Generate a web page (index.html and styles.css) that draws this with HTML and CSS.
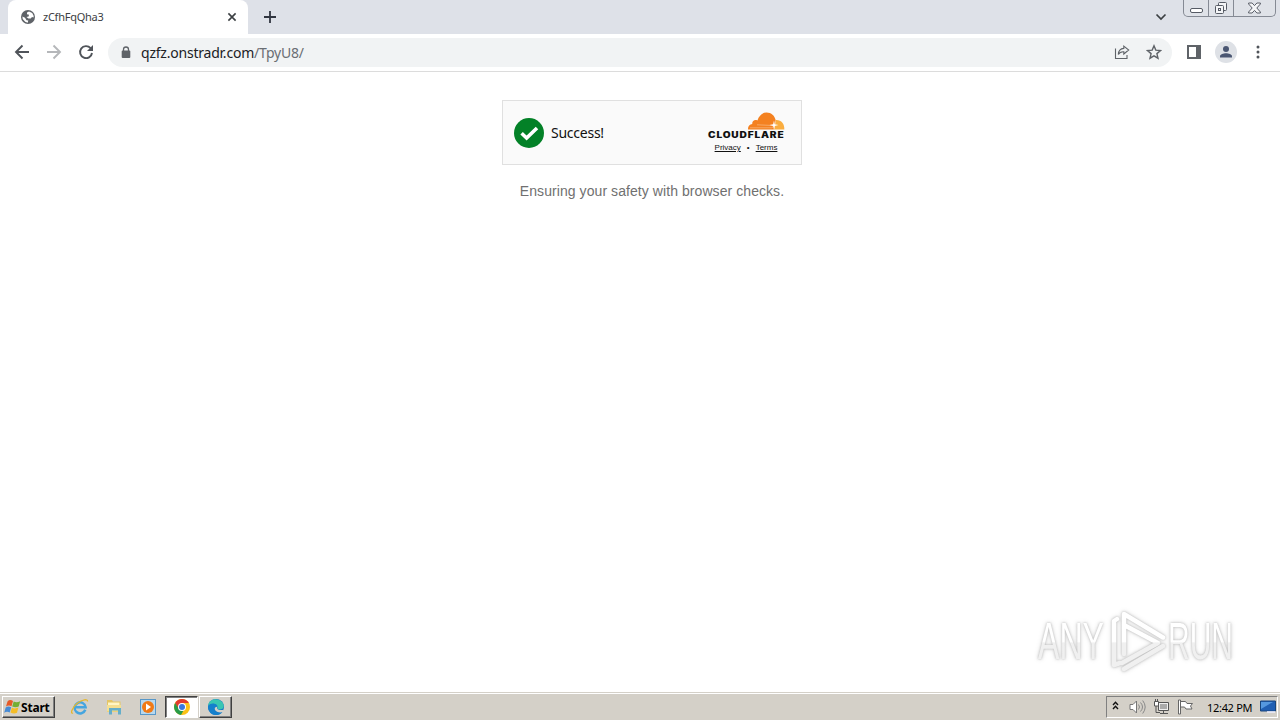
FILE: index.html
```html
<!DOCTYPE html>
<html lang="en">
<head>
<meta charset="utf-8">
<title>zCfhFqQha3</title>
<link rel="stylesheet" href="styles.css">
</head>
<body>
<header class="tabstrip">
  <div class="tab">
    <svg class="globe" width="14" height="14" viewBox="0 0 14 14"><circle cx="7" cy="7" r="7" fill="#5f6368"/><path d="M8 1.500 6 2.600v1.600l2 .6-.4 1.700-2.200.4 2 1.500 2.300.2L11 7l1.500.6.2-1.600-1.500-3zM1.400 6.500l2.600 1.300 1.500 2.400 1.800.3-.6 2.200-2.500-.9L1.700 9z" fill="#fff"/></svg>
    <span class="tab-title">zCfhFqQha3</span>
    <svg class="tab-close" width="10" height="10" viewBox="0 0 10 10"><path d="m1.400 1.400 7.200 7.200m0-7.200L1.400 8.600" stroke="#3c4043" stroke-width="1.600"/></svg>
  </div>
  <svg class="new-tab" width="12" height="12" viewBox="0 0 12 12"><path d="M6 0v12M0 6h12" stroke="#303540" stroke-width="1.800"/></svg>
  <svg class="tab-search" width="12" height="8" viewBox="0 0 12 8"><path d="m1.500 1.500 4.500 4.500 4.500-4.500" fill="none" stroke="#3c4043" stroke-width="1.700"/></svg>
  <div class="window-controls">
    <span class="wc wc-min"><svg width="13" height="5" viewBox="0 0 13 5"><rect x=".5" y=".5" width="12" height="4" rx="1.500" fill="#fff" stroke="#565b65"/></svg></span>
    <span class="wc wc-max"><svg width="14" height="14" viewBox="0 0 14 14" fill="#f4f5f7" stroke="#565b65"><rect x="4.500" y="1.500" width="8" height="8" rx="1"/><rect x="1.500" y="4.500" width="8" height="8" rx="1"/><rect x="4.500" y="7.500" width="2" height="2"/></svg></span>
    <span class="wc wc-close"><svg width="13" height="12" viewBox="0 0 13 12"><path d="M.6 1h3.500l2.400 2.600L8.900 1h3.500v1L8.800 6l3.600 4v1H8.900L6.500 8.400 4.100 11H.6v-1l3.600-4L.6 2z" fill="#f4f5f7" stroke="#5a5e68"/></svg></span>
  </div>
</header>
<nav class="toolbar">
  <div class="nav-icons">
    <svg width="16" height="16" viewBox="0 0 16 16" fill="none" stroke="#50545a" stroke-width="1.900"><path d="M15 8H2m6.500-6.500L2 8l6.500 6.500"/></svg>
    <svg width="16" height="16" viewBox="0 0 16 16" fill="none" stroke="#b5b7ba" stroke-width="1.900"><path d="M1 8h13M7.500 1.500 14 8l-6.500 6.500"/></svg>
    <svg width="16" height="16" viewBox="0 0 16 16"><path d="M12.600 4.200A6 6 0 1 0 14 9" fill="none" stroke="#50545a" stroke-width="1.900"/><path d="M15 1v6H9z" fill="#50545a"/></svg>
  </div>
  <div class="omnibox">
    <svg class="lock" width="10" height="13" viewBox="0 0 10 13"><path d="M2.500 5V3.500a2.500 2.500 0 0 1 5 0V5" fill="none" stroke="#5f6368" stroke-width="1.300"/><rect x=".7" y="4.600" width="8.600" height="7.400" rx="1" fill="#5f6368"/></svg>
    <div class="url"><span class="host">qzfz.onstradr.com</span><span class="path">/TpyU8/</span></div>
    <svg class="share" width="16" height="16" viewBox="0 0 16 16" fill="none" stroke="#5f6368" stroke-width="1.100"><path d="M1.500 4.500v10h11.500V11"/><path d="M9.800 2.100 14.700 6 9.800 10V7.700C7 7.500 5.400 8.500 4.300 10.500 4.500 7 6.300 4.700 9.800 4.400z"/></svg>
    <svg class="star" width="16" height="16" viewBox="0 0 16 16"><path d="m8 1.800 1.800 4.300 4.700.4-3.600 3.100 1.100 4.600L8 11.800l-4 2.400 1.100-4.600-3.600-3.100 4.700-.4z" fill="none" stroke="#5f6368" stroke-width="1.400"/></svg>
  </div>
  <svg class="side-panel" width="14" height="14" viewBox="0 0 14 14"><rect x="1" y="1" width="12" height="12" fill="#fff" stroke="#5f6368" stroke-width="2"/><path d="M9 1h4v12H9z" fill="#5f6368"/></svg>
  <svg class="avatar" width="22" height="22" viewBox="0 0 22 22"><circle cx="11" cy="11" r="11" fill="#dee1e6"/><circle cx="11" cy="8" r="3" fill="#4a5672"/><path d="M5 16.500v-1.200C5 13.200 8.500 12.200 11 12.200s6 1 6 3.100v1.200z" fill="#4a5672"/></svg>
  <svg class="menu" width="4" height="14" viewBox="0 0 4 14" fill="#50545a"><circle cx="2" cy="2" r="1.500"/><circle cx="2" cy="7" r="1.500"/><circle cx="2" cy="12" r="1.500"/></svg>
</nav>
<main class="page">
  <section class="widget">
    <svg class="check" width="30" height="30" viewBox="0 0 30 30"><circle cx="15" cy="15" r="15" fill="#038127"/><path d="m7.600 15.300 5 4.700L23 10" fill="none" stroke="#fff" stroke-width="3.600"/></svg>
    <span class="success">Success!</span>
    <div class="brand">
      <svg class="cloud" width="38" height="18" viewBox="0 0 38 18"><path d="M1 17.500c-.2-3.300 1.600-5.500 4.300-5.600-.6-2.900 2.500-5 5.100-3.500C12 3.400 15.500.5 19.500.5c4.800 0 8.300 3.300 9.200 7.800l-1.900 9.200z" fill="#f48120"/><path d="M27 17.500 29 8c5.200-.3 8.600 3.800 8.300 9.500z" fill="#faad3f"/><path d="M3 15.800h21.500c1.400 0 2-1.300 1.300-2.300L10 12.800" fill="none" stroke="#fbd3ac" stroke-width=".5"/><path d="m27 8.500.8 3.700 3.700.8-3.700.9-.8 3.600-.9-3.600-3.600-.9 3.600-.8z" fill="#fff"/></svg>
      <svg class="brand-name" width="78" height="10" viewBox="0 0 78 10"><text x="1" y="8" textLength="76.500" lengthAdjust="spacingAndGlyphs">CLOUDFLARE</text></svg>
      <div class="links"><a>Privacy</a><i>•</i><a>Terms</a></div>
    </div>
  </section>
  <p class="message">Ensuring your safety with browser checks.</p>
</main>
<svg class="watermark" width="240" height="90" viewBox="0 0 240 90">
  <defs>
    <linearGradient id="fade" gradientUnits="userSpaceOnUse" x1="0" y1="10" x2="0" y2="66"><stop offset=".49" stop-color="#fff"/><stop offset=".52" stop-color="#f0f0f0"/><stop offset="1" stop-color="#f0f0f0"/></linearGradient>
  </defs>
  <g class="mark">
    <text x="8" y="55" textLength="66" lengthAdjust="spacingAndGlyphs">ANY</text>
    <text x="138" y="55" textLength="65" lengthAdjust="spacingAndGlyphs">RUN</text>
    <path d="M94 50V10l39 23.500M94 21l34 18-36 20M133 42 94 65M84 61V17l3-2M84 61l6-2"/>
  </g>
</svg>
<footer class="taskbar">
  <div class="start">
    <svg width="17" height="16" viewBox="0 0 17 16"><path d="M3.500 2.500C5 .8 7 .7 9 2L7.500 7.200C5.500 6 3.700 6.300 2 7.500z" fill="#e65a28"/><path d="M9.700 2.500c2 1.100 4 1 6.500-.2L14.700 7.500c-2 1-4 1.100-6.500 0z" fill="#72ae35"/><path d="M1.700 8.500c1.800-1.300 3.500-1.300 5.500-.3l-1.500 5.300c-2-1.200-3.700-1-5.500.2z" fill="#478bd5"/><path d="M7.900 8.500c2 1.200 4 1.100 6.500.1L13 13.800c-2 1-4 1-6.500-.2z" fill="#f4bd27"/></svg>
    <b>Start</b>
  </div>
  <div class="quick">
    <svg width="18" height="18" viewBox="0 0 18 18"><path d="M14.300 11.800A5.500 5.500 0 1 1 14.600 9.200H5" fill="none" stroke="#45a5df" stroke-width="2.500"/><path d="M2 15C-.8 16.500.5 10 6 5.500S17 .8 16.500 3.500" fill="none" stroke="#e5b72f" stroke-width="1.300"/></svg>
    <svg width="18" height="18" viewBox="0 0 18 18"><path d="M2 2h5l1 1.500h7.500V14H2z" fill="#e4c565"/><path d="M3 4.500h11.500V7H3z" fill="#fff6c5"/><path d="M2 7h14v6.500H2z" fill="#f4df91"/><path d="M4 16.500V10h12v6.500h-3v-4H7v4z" fill="#64aeca"/></svg>
    <svg width="18" height="18" viewBox="0 0 18 18"><rect x="1.500" y="1.500" width="15" height="15" fill="#b7d8ee" stroke="#5797c8"/><circle cx="9" cy="9" r="6" fill="#f07a16"/><path d="m7 5.500 5 3.500-5 3.500z" fill="#fff"/></svg>
  </div>
  <div class="task active">
    <svg width="16" height="16" viewBox="0 0 16 16"><circle cx="8" cy="8" r="8" fill="#fbc116"/><path d="M1.100 4A8 8 0 0 1 14.900 4H8L4.500 10z" fill="#e33b2e"/><path d="M1.100 4 5 10l4.500 1.500L7 15.900A8 8 0 0 1 1.100 4" fill="#289b48"/><circle cx="8" cy="8" r="4" fill="#fff"/><circle cx="8" cy="8" r="3" fill="#3978df"/></svg>
  </div>
  <div class="task">
    <svg width="16" height="16" viewBox="0 0 16 16"><circle cx="8" cy="8" r="8" fill="#1677c5"/><path d="M0 7C1-.5 9-1.500 13.500 2.500c3 2.700 3.300 8-1.500 8-3 0-3-1.500-2.300-2.500C9 4 4 3.500 0 7z" fill="#39c6b2"/><path d="M0 7c3-4 8-3 9.600.2C7 7 5.500 9.500 7 12c1.500 2.300 5 2 7.500 1C11 17 5 17 2 13.200 0 11 0 9 0 7z" fill="#1580cc"/><path d="M9.500 7.500c-1.500 2 .5 4.500 6.500 3.200l-1 2.300c-5 1.500-9.500-1.500-8-4.500z" fill="#d4d0c8"/></svg>
  </div>
  <div class="tray">
    <svg class="chevrons" width="7" height="9" viewBox="0 0 7 9"><path d="M1 4 3.500 1.300 6 4M1 8l2.500-2.700L6 8" fill="none" stroke="#111" stroke-width="1.400"/></svg>
    <svg class="speaker" width="17" height="16" viewBox="0 0 17 16"><path d="M1 5.500h3L7.500 2v12L4 10.500H1z" fill="#fff" stroke="#777"/><path d="M9.500 5.500q2 2.500 0 5m2-7q4 4.500 0 9m2.200-11q5 6.500 0 13" fill="none" stroke="#888"/></svg>
    <svg class="network" width="17" height="16" viewBox="0 0 17 16"><path d="M5.500 3.500h10v8h-10z" fill="#eee" stroke="#555"/><path d="M7 5h7v5H7z" fill="#aaa"/><path d="M7 14.500h8M10.500 12v2M3 7v6.500h4" stroke="#555" fill="none"/><path d="M1.500 2.500h4V7h-4zM2.500 0v2m2-2v2" fill="#fff" stroke="#555"/></svg>
    <svg class="flag" width="17" height="16" viewBox="0 0 17 16"><path d="M1.500 1v14h2V1zM3.500 2.500h5l1.500 2h5.500l-2 2.500 1.500 3H9L7.500 8h-4z" fill="#fff" stroke="#666"/></svg>
    <time>12:42 PM</time>
    <svg class="desktop" width="16" height="14" viewBox="0 0 16 14"><path d="M.5 1h15v10H.5z" fill="#205fb3" stroke="#18457c"/><path d="M1 2h12L1 9z" fill="#5598df"/><path d="M7 12h8" stroke="#eef" stroke-width="1.500"/></svg>
  </div>
</footer>
</body>
</html>
```
FILE: styles.css
```css
* { box-sizing: border-box; }
body { margin: 0; width: 1280px; height: 720px; overflow: hidden; display: flex; flex-direction: column; background: #fff; font-family: "DejaVu Sans", sans-serif; }
svg { display: block; flex: none; }
.tabstrip { height: 34px; background: #dee1e8; display: flex; align-items: center; padding-left: 8px; flex: none; }
.tab { width: 240px; height: 34px; background: #fff; border-radius: 8px 8px 0 0; display: flex; align-items: center; padding: 0 11px 0 13px; }
.tab-title { font: 11px/16px "Noto Sans", sans-serif; letter-spacing: -.25px; color: #3c4043; margin-left: 8px; flex: 1; }
.new-tab { margin-left: 16px; }
.tab-search { margin-left: auto; margin-right: 16px; }
.window-controls { display: flex; width: 93px; height: 17px; margin-right: 4px; align-self: flex-start; border: 1px solid #858a94; border-top: 0; border-radius: 0 0 5px 5px; background: #dfe2e8; }
.wc { display: flex; align-items: center; justify-content: center; border-right: 1px solid #858a94; }
.wc-min { width: 25px; padding-top: 4px; }
.wc-max { width: 25px; }
.wc-close { flex: 1; border: 0; }
.toolbar { height: 38px; border-bottom: 1px solid #dcdcdc; display: flex; align-items: center; flex: none; padding: 0 20px 1px 14px; }
.nav-icons { display: flex; gap: 16px; width: 94px; }
.omnibox { width: 1064px; height: 29px; border-radius: 15px; background: #f1f3f4; display: flex; align-items: center; padding: 0 10px 0 13px; }
.url { font: 14px/20px "Noto Sans", sans-serif; letter-spacing: -.22px; margin-left: 10px; padding-top: 2px; flex: 1; color: #202124; }
.path { color: #6a6e73; }
.star { margin-left: 16px; }
.side-panel { margin-left: 15px; }
.avatar { margin-left: 14px; }
.menu { margin-left: 19px; }
.page { flex: 1; display: flex; flex-direction: column; align-items: center; padding: 28px 0 0 24px; }
.widget { width: 300px; height: 65px; border: 1px solid #e0e0e0; background: #fafafa; display: flex; align-items: center; padding: 0 16px 0 11px; }
.success { font: 14px/18px "Noto Sans", sans-serif; letter-spacing: -.25px; color: #111; margin-left: 7px; }
.brand { width: 78px; margin-left: auto; padding-top: 2px; display: flex; flex-direction: column; align-items: center; }
.cloud { align-self: flex-end; }
.brand-name { font: 900 8.5px Inter, sans-serif; letter-spacing: .7px; fill: #111; }
.links { display: flex; gap: 6px; font: 8px/15px "Liberation Sans", sans-serif; color: #111; }
.links a { text-decoration: underline; }
.links i { font-style: normal; }
.message { margin: 16px 0 0; font: 14px/20px "Liberation Sans", sans-serif; letter-spacing: .07px; color: #707070; }
.watermark { position: absolute; left: 1030px; top: 604px; font: 51px "Liberation Sans", sans-serif; }
.mark { fill: url(#fade); filter: drop-shadow(0 0 1px #bbb) drop-shadow(0 0 2px #ddd); }
.mark path { fill: none; stroke: url(#fade); stroke-width: 4.5; stroke-linejoin: round; stroke-linecap: round; }
.taskbar { height: 28px; background: #d4d0c8; border-top: 1px solid #d4d0c8; box-shadow: inset 0 1px #fff; display: flex; align-items: center; padding: 1px 2px 0; flex: none; }
.start { width: 53px; height: 22px; display: flex; align-items: center; padding-left: 1px; border: 1px solid; border-color: #fff #404040 #404040 #fff; box-shadow: inset -1px -1px #808080; }
.start b { font: bold 12px "Noto Sans", sans-serif; letter-spacing: -.2px; }
.quick { display: flex; gap: 16px; margin: 0 8px 0 16px; }
.task { width: 33px; height: 22px; display: flex; align-items: center; justify-content: center; border: 1px solid; border-color: #fff #404040 #404040 #fff; box-shadow: inset -1px -1px #808080; margin-left: 1px; }
.task.active { background: #fff; border-color: #404040 #fff #fff #404040; box-shadow: inset 1px 1px #808080; margin-left: 0; }
.tray { width: 172px; height: 22px; margin-left: auto; display: flex; align-items: center; padding-left: 5px; border: 1px solid; border-color: #808080 #fff #fff #808080; }
.chevrons { margin-bottom: 3px; }
.speaker { margin-left: 10px; }
.network, .flag { margin-left: 7px; }
.tray time { font: 11px "Noto Sans", sans-serif; letter-spacing: -.3px; margin-left: 13px; width: 46px; white-space: nowrap; }
.desktop { margin-left: 7px; }
```
